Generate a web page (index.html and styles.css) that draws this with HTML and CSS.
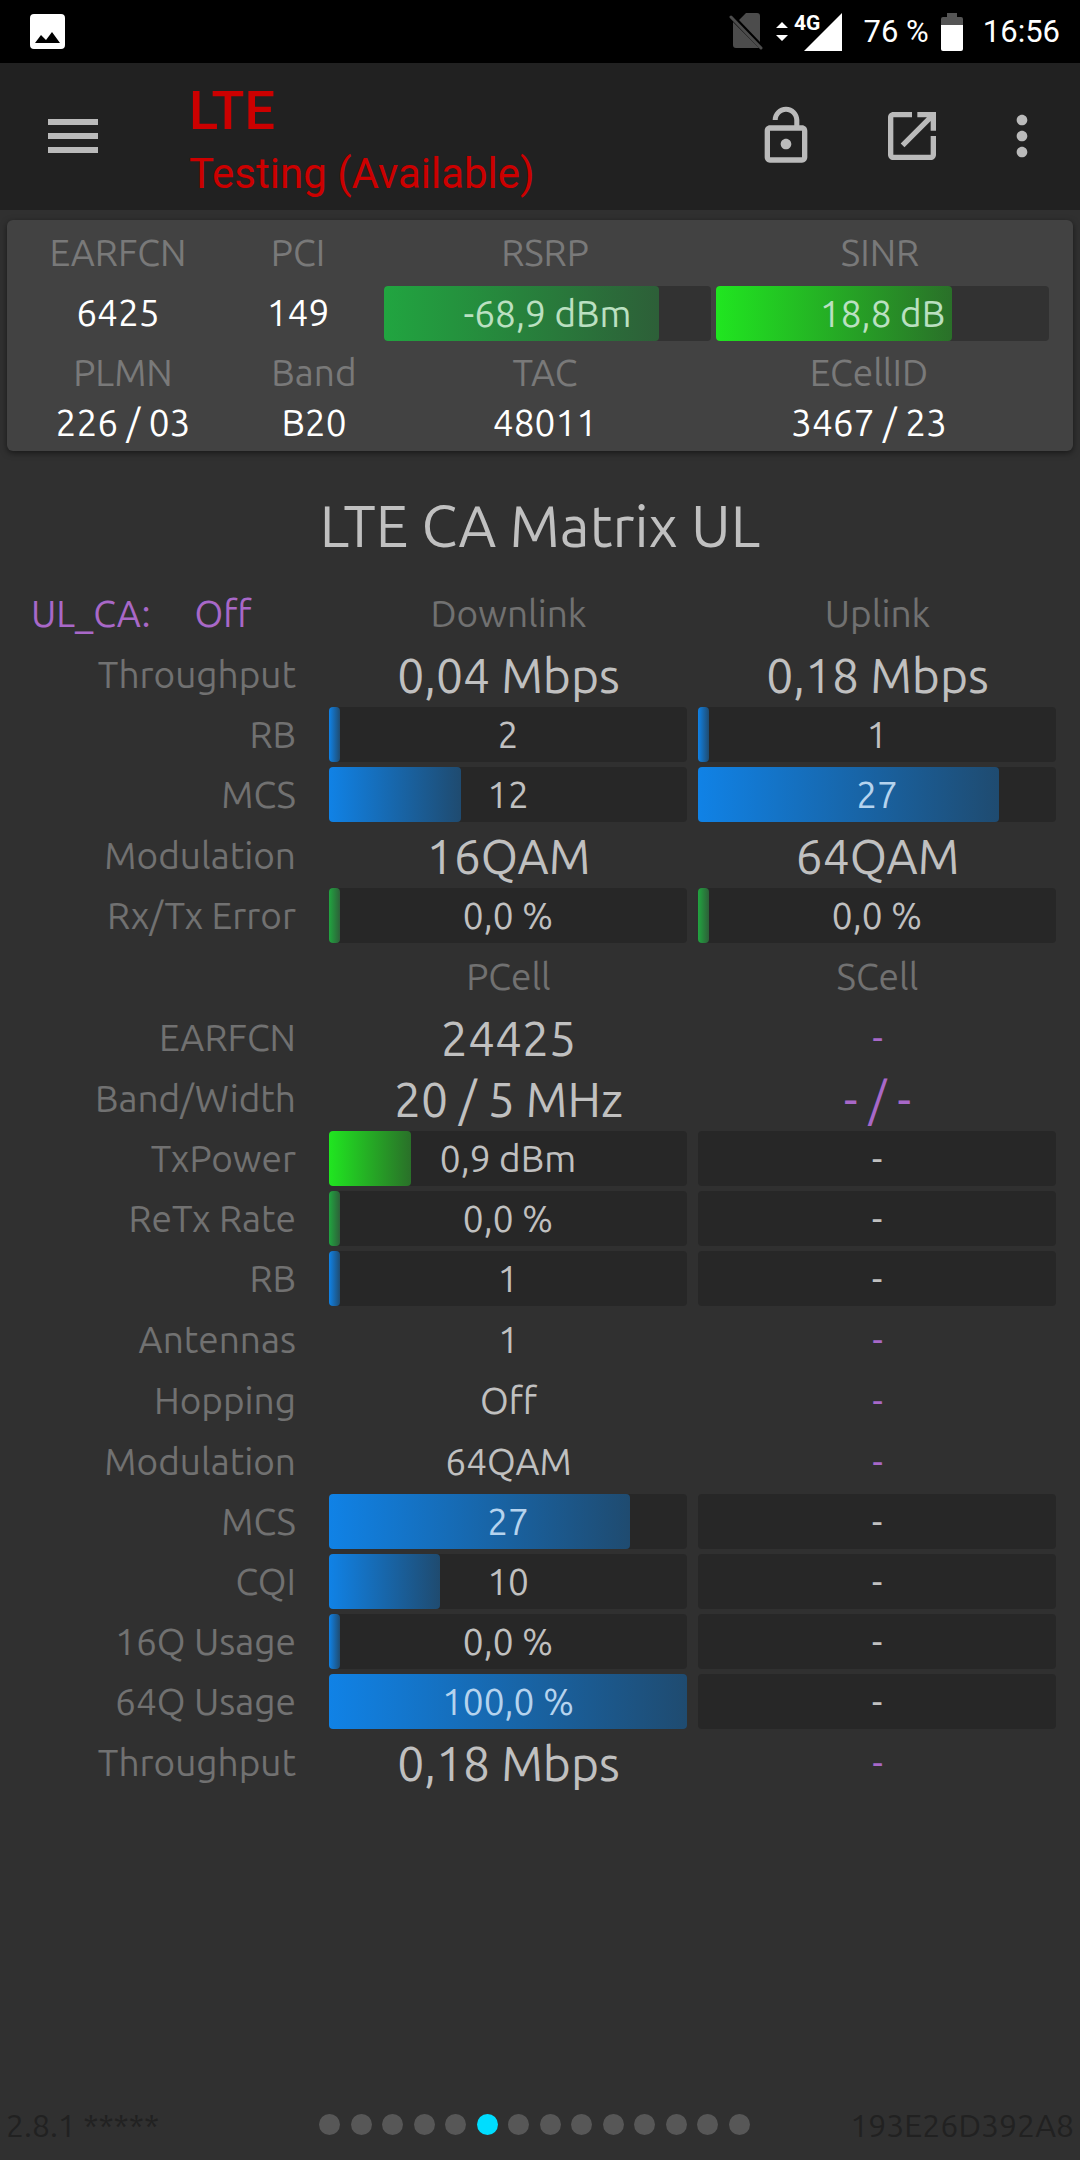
FILE: index.html
```html
<!DOCTYPE html>
<html lang="en">
    <head>
        <meta charset="utf-8">
        <meta name="viewport" content="width=device-width, initial-scale=1">
        <title>LTE CA Matrix UL</title>
        <link rel="stylesheet" href="styles.css">
    </head>
    <body>
        <div class="statusbar">
            <svg class="ic-image" width="35" height="35" viewBox="0 0 35 35">
                <path fill="#fff" fill-rule="evenodd" d="M4 0h27a4 4 0 0 1 4 4v27a4 4 0 0 1-4 4H4a4 4 0 0 1-4-4V4a4 4 0 0 1 4-4zM5 29h25L22 18l-6 8-5-5z"/>
            </svg>
            <div class="status-right">
                <svg width="35" height="38" viewBox="0 0 35 38">
                    <path fill="#4c4c4c" d="M17 0h11a3 3 0 0 1 3 3v26L10 7zM4 9l26 26H7a3 3 0 0 1-3-3z"/>
                    <path stroke="#4c4c4c" stroke-width="3" stroke-linecap="round" d="M2 4l30 31"/>
                </svg>
                <svg class="ic-signal" width="66" height="38" viewBox="0 0 66 38">
                    <path fill="#fff" d="M6 9l6 6H0zM0 22h12l-6 6z"/>
                    <text class="net" x="18" y="17">4G</text>
                    <path fill="#fff" d="M66 0v38H28z"/>
                </svg>
                <span class="percent">76 %</span>
                <svg class="ic-battery" width="22" height="38" viewBox="0 0 22 38">
                    <path fill="#555" d="M6 0h10v4h4a2 2 0 0 1 2 2v6H0V6a2 2 0 0 1 2-2h4z"/>
                    <path fill="#fff" d="M0 12h22v24a2 2 0 0 1-2 2H2a2 2 0 0 1-2-2z"/>
                </svg>
                <span>16:56</span>
            </div>
        </div>

        <header class="appbar">
            <button type="button" class="menu" aria-label="Menu">
                <svg width="50" height="34" viewBox="0 0 50 34"><path d="M0 0h50v6H0zM0 14h50v6H0zM0 28h50v6H0z"/></svg>
            </button>
            <div class="heading">
                <div class="net-type">LTE</div>
                <div class="net-name">Testing (Available)</div>
            </div>
            <div class="actions">
                <button type="button" aria-label="Lock">
                    <svg width="64" height="64" viewBox="0 0 24 24"><path d="M12 17c1.1 0 2-.9 2-2s-.9-2-2-2-2 .9-2 2 .9 2 2 2zm6-9h-1V6c0-2.76-2.24-5-5-5S7 3.24 7 6h1.9c0-1.71 1.39-3.1 3.1-3.1 1.71 0 3.1 1.39 3.1 3.1v2H6c-1.1 0-2 .9-2 2v10c0 1.1.9 2 2 2h12c1.1 0 2-.9 2-2V10c0-1.1-.9-2-2-2zm0 12H6V10h12v10z"/></svg>
                </button>
                <button type="button" aria-label="Open">
                    <svg width="64" height="64" viewBox="0 0 24 24"><path d="M19 19H5V5h7V3H5c-1.11 0-2 .9-2 2v14c0 1.1.89 2 2 2h14c1.1 0 2-.9 2-2v-7h-2v7zM14 3v2h3.59l-9.83 9.83 1.41 1.41L19 6.41V10h2V3h-7z"/></svg>
                </button>
                <button type="button" class="more" aria-label="More">
                    <svg width="64" height="64" viewBox="0 0 24 24"><path d="M12 8c1.1 0 2-.9 2-2s-.9-2-2-2-2 .9-2 2 .9 2 2 2zm0 2c-1.1 0-2 .9-2 2s.9 2 2 2 2-.9 2-2-.9-2-2-2zm0 6c-1.1 0-2 .9-2 2s.9 2 2 2 2-.9 2-2-.9-2-2-2z"/></svg>
                </button>
            </div>
        </header>

        <section class="card">
            <table class="cell-info signal">
                <tr><th class="c1">EARFCN</th><th class="c2">PCI</th><th class="c3">RSRP</th><th class="c4">SINR</th></tr>
                <tr class="bars">
                    <td>6425</td>
                    <td>149</td>
                    <td><div class="bar on-green"><div class="fill green" style="width: 84%"></div><span>-68,9 dBm</span></div></td>
                    <td><div class="bar on-green"><div class="fill lime" style="width: 71%"></div><span>18,8 dB</span></div></td>
                </tr>
            </table>
            <table class="cell-info ident">
                <tr><th class="c1">PLMN</th><th class="c2">Band</th><th class="c3">TAC</th><th class="c4">ECellID</th></tr>
                <tr><td>226 / 03</td><td>B20</td><td>48011</td><td>3467 / 23</td></tr>
            </table>
        </section>

        <main>
            <h1>LTE CA Matrix UL</h1>

            <table class="matrix">
                <tr>
                    <th class="ulca"><div><span>UL_CA:</span><span>Off</span></div></th>
                    <th>Downlink</th>
                    <th>Uplink</th>
                </tr>
                <tr><th>Throughput</th><td class="big">0,04 Mbps</td><td class="big">0,18 Mbps</td></tr>
                <tr class="bars">
                    <th>RB</th>
                    <td><div class="bar"><div class="fill blue" style="width: 3%"></div><span>2</span></div></td>
                    <td><div class="bar"><div class="fill blue" style="width: 3%"></div><span>1</span></div></td>
                </tr>
                <tr class="bars">
                    <th>MCS</th>
                    <td><div class="bar"><div class="fill blue" style="width: 37%"></div><span>12</span></div></td>
                    <td><div class="bar on-blue"><div class="fill blue" style="width: 84%"></div><span>27</span></div></td>
                </tr>
                <tr><th>Modulation</th><td class="big">16QAM</td><td class="big">64QAM</td></tr>
                <tr class="bars">
                    <th>Rx/Tx Error</th>
                    <td><div class="bar"><div class="fill green" style="width: 3%"></div><span>0,0 %</span></div></td>
                    <td><div class="bar"><div class="fill green" style="width: 3%"></div><span>0,0 %</span></div></td>
                </tr>

                <tr><th></th><th>PCell</th><th>SCell</th></tr>
                <tr><th>EARFCN</th><td class="big">24425</td><td class="none">-</td></tr>
                <tr><th>Band/Width</th><td class="big">20 / 5 MHz</td><td class="none big">- / -</td></tr>
                <tr class="bars">
                    <th>TxPower</th>
                    <td><div class="bar"><div class="fill lime" style="width: 23%"></div><span>0,9 dBm</span></div></td>
                    <td><div class="bar"><span>-</span></div></td>
                </tr>
                <tr class="bars">
                    <th>ReTx Rate</th>
                    <td><div class="bar"><div class="fill green" style="width: 3%"></div><span>0,0 %</span></div></td>
                    <td><div class="bar"><span>-</span></div></td>
                </tr>
                <tr class="bars">
                    <th>RB</th>
                    <td><div class="bar"><div class="fill blue" style="width: 3%"></div><span>1</span></div></td>
                    <td><div class="bar"><span>-</span></div></td>
                </tr>
                <tr><th>Antennas</th><td>1</td><td class="none">-</td></tr>
                <tr><th>Hopping</th><td>Off</td><td class="none">-</td></tr>
                <tr><th>Modulation</th><td>64QAM</td><td class="none">-</td></tr>
                <tr class="bars">
                    <th>MCS</th>
                    <td><div class="bar on-blue"><div class="fill blue" style="width: 84%"></div><span>27</span></div></td>
                    <td><div class="bar"><span>-</span></div></td>
                </tr>
                <tr class="bars">
                    <th>CQI</th>
                    <td><div class="bar"><div class="fill blue" style="width: 31%"></div><span>10</span></div></td>
                    <td><div class="bar"><span>-</span></div></td>
                </tr>
                <tr class="bars">
                    <th>16Q Usage</th>
                    <td><div class="bar"><div class="fill blue" style="width: 3%"></div><span>0,0 %</span></div></td>
                    <td><div class="bar"><span>-</span></div></td>
                </tr>
                <tr class="bars">
                    <th>64Q Usage</th>
                    <td><div class="bar on-blue"><div class="fill blue" style="width: 100%"></div><span>100,0 %</span></div></td>
                    <td><div class="bar"><span>-</span></div></td>
                </tr>
                <tr><th>Throughput</th><td class="big">0,18 Mbps</td><td class="none">-</td></tr>
            </table>
        </main>

        <footer>
            <span class="version">2.8.1 *****</span>
            <nav class="dots" aria-label="Pages">
                <button type="button" aria-label="Page 1"></button>
                <button type="button" aria-label="Page 2"></button>
                <button type="button" aria-label="Page 3"></button>
                <button type="button" aria-label="Page 4"></button>
                <button type="button" aria-label="Page 5"></button>
                <button type="button" class="active" aria-label="Page 6"></button>
                <button type="button" aria-label="Page 7"></button>
                <button type="button" aria-label="Page 8"></button>
                <button type="button" aria-label="Page 9"></button>
                <button type="button" aria-label="Page 10"></button>
                <button type="button" aria-label="Page 11"></button>
                <button type="button" aria-label="Page 12"></button>
                <button type="button" aria-label="Page 13"></button>
                <button type="button" aria-label="Page 14"></button>
            </nav>
            <span class="serial">193E26D392A8</span>
        </footer>
    </body>
</html>
```
FILE: styles.css
```css
* {
    box-sizing: border-box;
}
body {
    margin: 0;
    min-height: 100vh;
    display: flex;
    flex-direction: column;
    background: #303030;
    color: #c0c0c0;
    font-family: Ubuntu, "Noto Sans", sans-serif;
    font-size: 37px;
    line-height: 50px;
}
button {
    padding: 0;
    border: none;
    background: none;
    cursor: pointer;
}
svg {
    display: block;
}

/* status bar */
.statusbar {
    display: flex;
    justify-content: space-between;
    align-items: center;
    height: 63px;
    padding: 0 20px 0 30px;
    background: #000;
    color: #fff;
    font-family: Roboto, sans-serif;
    font-size: 31px;
}
.status-right {
    display: flex;
    align-items: center;
}
.ic-signal {
    margin: 0 22px 0 12px;
    overflow: visible;
}
.ic-battery {
    margin: 0 20px 0 12px;
}
.net {
    fill: #fff;
    font-size: 21px;
    font-weight: bold;
}

/* app bar */
.appbar {
    display: flex;
    align-items: center;
    height: 147px;
    padding: 0 26px 2px 48px;
    background: #212121;
    color: #cc0000;
    font-family: Roboto, sans-serif;
}
.appbar svg {
    fill: #bababa;
}
.heading {
    flex: 1;
    padding: 10px 0 0 91px;
}
.net-type {
    font-size: 54px;
    font-weight: 500;
    line-height: 66px;
}
.net-name {
    font-size: 42px;
    line-height: 60px;
}
.actions {
    display: flex;
    gap: 62px;
}
.more {
    margin-left: -16px;
}

/* serving cell card */
.card {
    margin: 10px 7px 0;
    padding: 8px 19px 3px 17px;
    border-radius: 6px;
    background: #424242;
    box-shadow: 0 2px 6px rgba(0, 0, 0, 0.5);
}
table {
    width: 100%;
    border-collapse: collapse;
    table-layout: fixed;
}
th {
    padding: 0;
    color: #717171;
    font-weight: normal;
}
td {
    padding: 0;
    text-align: center;
}
.cell-info td {
    color: #fff;
}
.cell-info th {
    color: #797979;
}
.cell-info .bars td {
    height: 70px;
}
.cell-info .bar {
    margin-right: 5px;
    background: #323232;
}
.signal .c1 { width: 188px; }
.signal .c2 { width: 172px; }
.signal .c3 { width: 332px; padding-right: 10px; }
.signal .c4 { padding-right: 10px; }
.ident .c1 { width: 198px; }
.ident .c2 { width: 184px; }
.ident .c3 { width: 278px; }

/* bars */
.bar {
    display: grid;
    height: 55px;
    border-radius: 4px;
    background: #272727;
    line-height: 55px;
}
.bar > * {
    grid-area: 1 / 1;
}
.cell-info .on-green {
    color: #bbe0c1;
}
.on-blue {
    color: #b5d3ee;
}
.fill {
    border-radius: 4px;
}
.blue {
    background: linear-gradient(to right, #1082e6, #1f4b70);
}
.green {
    background: linear-gradient(to right, #21a540, #2d5f38);
}
.lime {
    background: linear-gradient(to right, #20e620, #2a7029);
}

/* matrix */
main {
    flex: 1;
    padding-right: 18px;
}
h1 {
    margin: 38px -18px 20px 0;
    font-size: 58px;
    font-weight: normal;
    line-height: 74px;
    text-align: center;
}
.matrix tr {
    height: 61px;
}
.matrix .bars {
    height: 60px;
}
.matrix .bars td {
    padding: 2px 6px 3px 5px;
}
.matrix th:first-child {
    width: 324px;
    padding-right: 28px;
    text-align: right;
}
.matrix .big {
    font-size: 48px;
}
.matrix .none {
    color: #a868c8;
}
.matrix .ulca {
    color: #a868c8;
}
.ulca div {
    display: flex;
    gap: 44px;
    padding-left: 31px;
}

/* footer */
footer {
    display: flex;
    justify-content: space-between;
    align-items: center;
    height: 71px;
    padding: 0 6px;
    color: #212121;
    font-size: 32px;
}
.version,
.serial {
    flex: 1;
}
.serial {
    padding-left: 11px;
    text-align: right;
}
.dots {
    display: flex;
    justify-content: space-between;
    width: 431px;
}
.dots button {
    width: 21px;
    height: 21px;
    border-radius: 50%;
    background: #575757;
}
.dots .active {
    background: #00ddff;
}
```
